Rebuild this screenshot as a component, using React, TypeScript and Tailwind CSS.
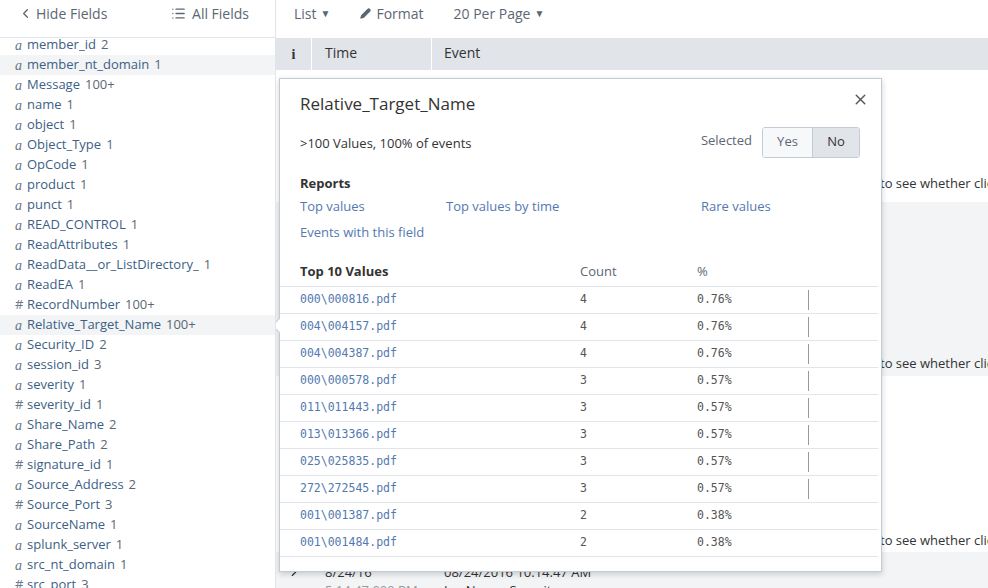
import { ChevronLeft, ChevronRight, List, Pencil, X } from 'lucide-react';

const fields: [string, string, string][] = [
  ['a', 'member_id', '2'],
  ['a', 'member_nt_domain', '1'],
  ['a', 'Message', '100+'],
  ['a', 'name', '1'],
  ['a', 'object', '1'],
  ['a', 'Object_Type', '1'],
  ['a', 'OpCode', '1'],
  ['a', 'product', '1'],
  ['a', 'punct', '1'],
  ['a', 'READ_CONTROL', '1'],
  ['a', 'ReadAttributes', '1'],
  ['a', 'ReadData__or_ListDirectory_', '1'],
  ['a', 'ReadEA', '1'],
  ['#', 'RecordNumber', '100+'],
  ['a', 'Relative_Target_Name', '100+'],
  ['a', 'Security_ID', '2'],
  ['a', 'session_id', '3'],
  ['a', 'severity', '1'],
  ['#', 'severity_id', '1'],
  ['a', 'Share_Name', '2'],
  ['a', 'Share_Path', '2'],
  ['#', 'signature_id', '1'],
  ['a', 'Source_Address', '2'],
  ['#', 'Source_Port', '3'],
  ['a', 'SourceName', '1'],
  ['a', 'splunk_server', '1'],
  ['a', 'src_nt_domain', '1'],
  ['#', 'src_port', '3'],
];

const highlighted = ['member_nt_domain', 'Relative_Target_Name'];

const topValues: [string, number, string][] = [
  ['000\\000816.pdf', 4, '0.76%'],
  ['004\\004157.pdf', 4, '0.76%'],
  ['004\\004387.pdf', 4, '0.76%'],
  ['000\\000578.pdf', 3, '0.57%'],
  ['011\\011443.pdf', 3, '0.57%'],
  ['013\\013366.pdf', 3, '0.57%'],
  ['025\\025835.pdf', 3, '0.57%'],
  ['272\\272545.pdf', 3, '0.57%'],
  ['001\\001387.pdf', 2, '0.38%'],
  ['001\\001484.pdf', 2, '0.38%'],
];

function Sidebar() {
  return (
    <aside className="w-[276px] shrink-0 border-r border-[#e1e4e8] bg-white h-full overflow-hidden">
      <div className="h-[38px] flex items-start pt-[3px] justify-between pl-[18px] pr-[26px] border-b border-[#e1e4e8] text-[14px] text-[#5c6773]">
        <span className="flex items-center gap-[3px]">
          <ChevronLeft size={15} strokeWidth={2} />
          Hide Fields
        </span>
        <span className="flex items-center gap-[6px]">
          <List size={15} strokeWidth={2.2} />
          All Fields
        </span>
      </div>
      <ul className="-mt-[3px]">
        {fields.map(([t, name, count]) => (
          <li
            key={name}
            className={`h-[20px] flex items-center pl-[15px] text-[13px] whitespace-nowrap ${
              highlighted.includes(name) ? 'bg-[#f2f4f5]' : ''
            }`}
          >
            <span
              className={`w-[12px] text-[#6b7785] ${
                t === 'a' ? 'italic font-["Liberation_Serif",serif] text-[14px]' : 'text-[13px]'
              }`}
            >
              {t}
            </span>
            <span className="text-[#3d5f86]">{name}</span>
            <span className="ml-[5px] text-[#5c6773]">{count}</span>
          </li>
        ))}
      </ul>
    </aside>
  );
}

function EventRow({ bg, h, textTop }: { bg: string; h: number; textTop: number }) {
  return (
    <div className={`${bg} relative overflow-hidden`} style={{ height: h }}>
      <div
        className="absolute left-[604px] whitespace-nowrap text-[13px] text-[#333]"
        style={{ top: textTop }}
      >
        to see whether client
      </div>
    </div>
  );
}

function Popup() {
  return (
    <div className="absolute left-[3px] top-[8px] w-[603px] h-[494px] bg-white border border-[#c3cbd4] shadow-[0_2px_6px_rgba(0,0,0,0.18)] z-10">
      {/* arrow */}
      <div className="absolute -left-[6px] top-[241px] w-[11px] h-[11px] bg-white border-l border-b border-[#c3cbd4] rotate-45" />
      <div className="px-[20px] pt-[13px]">
        <div className="flex items-start justify-between">
          <h3 className="text-[17px] text-[#333] leading-[24px]">Relative_Target_Name</h3>
          <button className="-mt-[1px] mr-[-8px] text-[#555]">
            <X size={17} strokeWidth={2} />
          </button>
        </div>
        <div className="mt-[11px] flex items-center justify-between h-[30px]">
          <span className="text-[13px] text-[#333] mt-[3px]">&gt;100 Values, 100% of events</span>
          <div className="flex items-center mr-[1px]">
            <span className="text-[13px] text-[#5c6773] mr-[10px] -mt-[3px]">Selected</span>
            <div className="flex h-[31px] border border-[#c3cbd4] rounded-[3px] overflow-hidden text-[13px]">
              <span className="w-[50px] flex items-center justify-center bg-[#f7f8fa] text-[#5c6773] border-r border-[#c3cbd4]">
                Yes
              </span>
              <span className="w-[46px] flex items-center justify-center bg-[#e1e4e8] text-[#333]">No</span>
            </div>
          </div>
        </div>
        <div className="mt-[17px] text-[13px] font-bold text-[#333]">Reports</div>
        <div className="mt-[3px] flex text-[13px] text-[#5379af]">
          <span className="w-[146px]">Top values</span>
          <span className="w-[255px]">Top values by time</span>
          <span>Rare values</span>
        </div>
        <div className="mt-[7px] text-[13px] text-[#5379af]">Events with this field</div>
      </div>
      <div className="mt-[16px] pr-[3px]">
        <div className="h-[28px] flex items-center pl-[20px] text-[13px] border-b border-[#e1e4e8]">
          <span className="w-[280px] font-bold text-[#333]">Top 10 Values</span>
          <span className="w-[117px] text-[#5c6773]">Count</span>
          <span className="text-[#5c6773]">%</span>
        </div>
        {topValues.map(([v, c, p]) => (
          <div
            key={v}
            className="h-[27px] flex items-center pl-[20px] border-b border-[#e1e4e8] font-['DejaVu_Sans_Mono',monospace] text-[11.5px]"
          >
            <span className="w-[280px] text-[#5379af]">{v}</span>
            <span className="w-[117px] text-[#555]">{c}</span>
            <span className="w-[111px] text-[#555]">{p}</span>
            {c >= 3 && <span className="w-px h-[20px] bg-[#999]" />}
          </div>
        ))}
      </div>
    </div>
  );
}

function Main() {
  return (
    <main className="flex-1 relative overflow-hidden h-full">
      <div className="h-[38px] flex items-start pt-[3px] text-[14px] text-[#5c6773]">
        <span className="ml-[18px] flex items-center gap-[4px]">
          List <span className="text-[10px]">▼</span>
        </span>
        <span className="ml-[30px] flex items-center gap-[5px]">
          <Pencil size={11} strokeWidth={2.5} className="fill-[#5c6773]" />
          Format
        </span>
        <span className="ml-[30px] flex items-center gap-[4px]">
          20 Per Page <span className="text-[10px]">▼</span>
        </span>
      </div>
      <div className="h-[32px] bg-[#e1e4e8] flex items-center text-[14px] text-[#333] shadow-[0_1px_2px_rgba(0,0,0,0.15)]">
        <span className="w-[36px] text-center font-bold font-['Liberation_Serif',serif] text-[14px] border-r border-white h-full flex items-center justify-center">
          i
        </span>
        <span className="w-[120px] pl-[13px] pb-[3px] border-r border-white h-full flex items-center">Time</span>
        <span className="pl-[12px] pb-[3px]">Event</span>
      </div>
      <div className="relative">
        <div className="absolute left-[222px] -top-[2px] text-[13px] text-[#333] whitespace-nowrap">
          Show all 38 lines&nbsp;&nbsp;&nbsp;&nbsp;&nbsp;&nbsp;&nbsp;&nbsp;&nbsp;&nbsp; add field to table
        </div>
        <EventRow bg="bg-white" h={132} textTop={104} />
        <EventRow bg="bg-[#f2f4f5]" h={174} textTop={152} />
        <EventRow bg="bg-white" h={176} textTop={155} />
        <div className="bg-[#f2f4f5] h-[80px] flex text-[13px] text-[#333]">
          <span className="w-[36px] flex justify-center pt-[13px]">
            <ChevronRight size={14} strokeWidth={2} />
          </span>
          <div className="w-[120px] pl-[13px] pt-[11px] leading-[18px]">
            <div>8/24/16</div>
            <div className="text-[#999]">5:14:47.000 PM</div>
          </div>
          <div className="pl-[12px] pt-[11px] leading-[18px]">
            <div>08/24/2016 10:14:47 AM</div>
            <div>LogName=Security</div>
          </div>
        </div>
        <Popup />
      </div>
    </main>
  );
}

export default function App() {
  return (
    <div className="w-[988px] h-[588px] flex bg-white overflow-hidden font-['Open_Sans',sans-serif]">
      <Sidebar />
      <Main />
    </div>
  );
}
